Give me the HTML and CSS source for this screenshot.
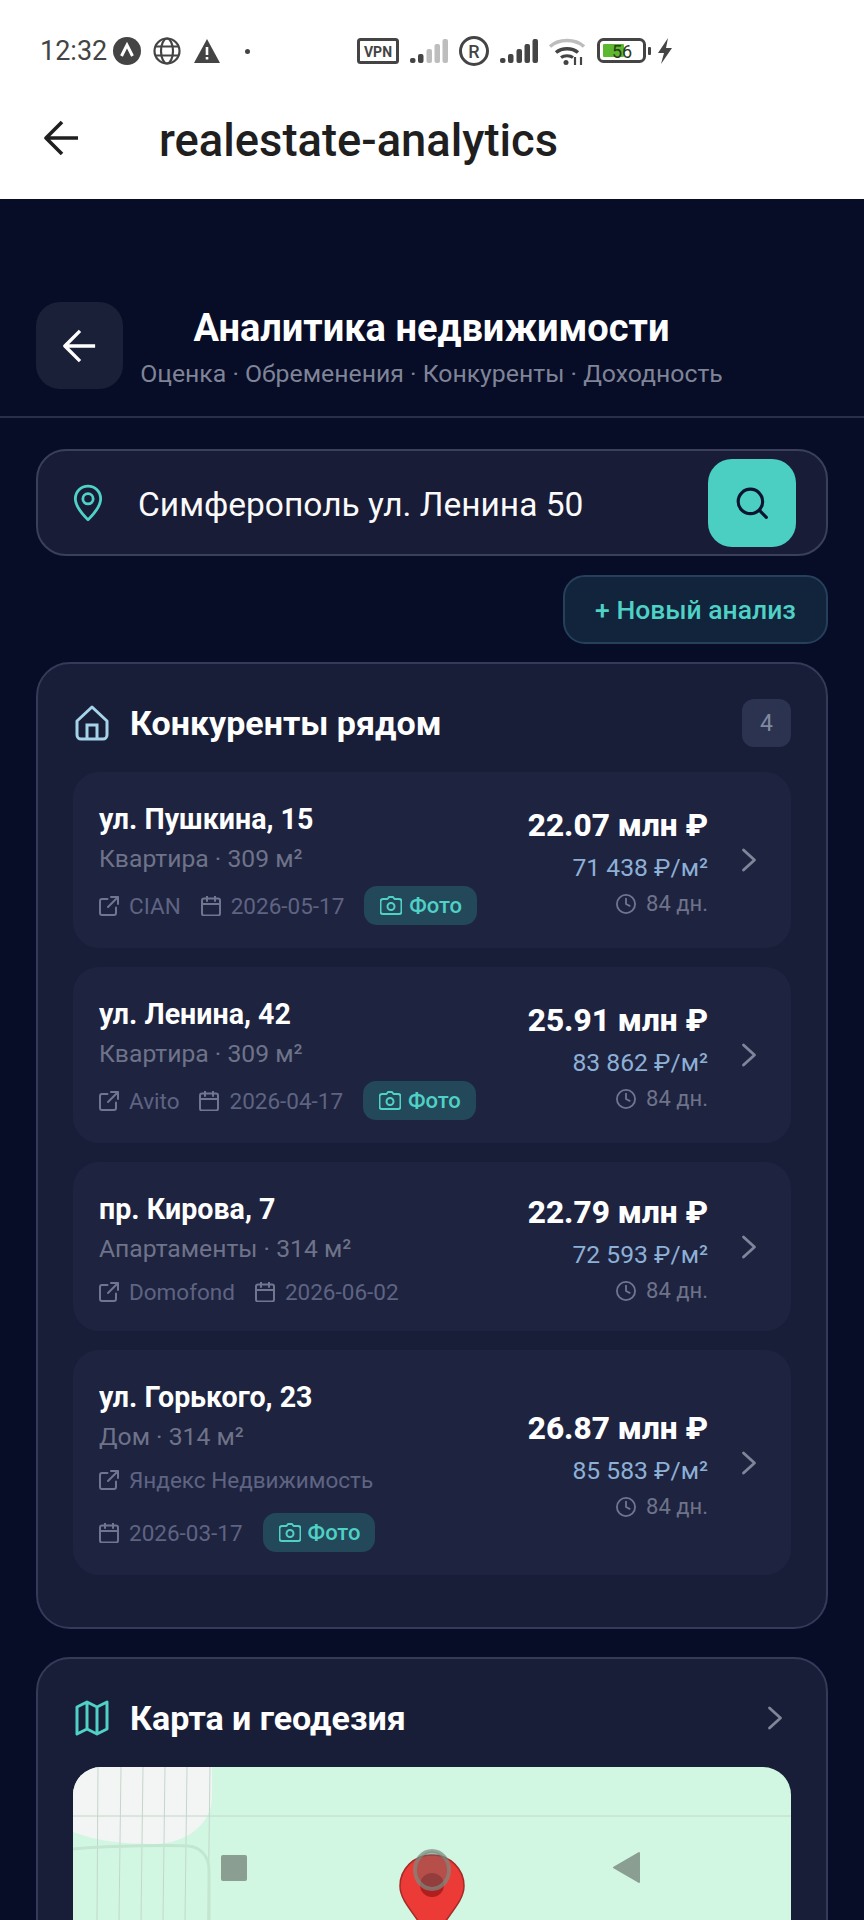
FILE: index.html
```html
<!DOCTYPE html>
<html lang="ru">
<head>
<meta charset="utf-8">
<title>realestate-analytics</title>
<link rel="stylesheet" href="styles.css">
</head>
<body>
<svg class="defs" width="0" height="0" aria-hidden="true">
  <symbol id="i-ext" viewBox="2 2 20 20"><path d="M19 13.500V19a2 2 0 0 1-2 2H5a2 2 0 0 1-2-2V7a2 2 0 0 1 2-2h5.500M14 3h7v7M21 3 11 13" fill="none" stroke="currentColor" stroke-width="2" stroke-linecap="round" stroke-linejoin="round"/></symbol>
  <symbol id="i-cal" viewBox="2 2 20 20"><rect x="3" y="4.500" width="18" height="17" rx="2" fill="none" stroke="currentColor" stroke-width="2"/><path d="M8 2v5M16 2v5M3 10h18" fill="none" stroke="currentColor" stroke-width="2" stroke-linecap="round"/></symbol>
  <symbol id="i-cam" viewBox="1 1 22 22"><path d="M8.500 5 10 3h4l1.500 2H20a2.500 2.500 0 0 1 2.500 2.500v10A2.500 2.500 0 0 1 20 20H4a2.500 2.500 0 0 1-2.500-2.500v-10A2.500 2.500 0 0 1 4 5z" fill="none" stroke="currentColor" stroke-width="2" stroke-linejoin="round"/><circle cx="12" cy="12.500" r="3.500" fill="none" stroke="currentColor" stroke-width="2"/></symbol>
  <symbol id="i-clock" viewBox="1 1 22 22"><circle cx="12" cy="12" r="10" fill="none" stroke="currentColor" stroke-width="2"/><path d="M12 6v6l4 2" fill="none" stroke="currentColor" stroke-width="2" stroke-linecap="round" stroke-linejoin="round"/></symbol>
  <symbol id="i-chev" viewBox="0 0 24 24"><path d="m6.500 2 11 10-11 10" fill="none" stroke="currentColor" stroke-width="2.800" stroke-linecap="round" stroke-linejoin="round"/></symbol>
  <symbol id="i-back" viewBox="0 0 36 36"><path d="M34 18H3M18 2 2 18l16 16" fill="none" stroke="currentColor" stroke-width="3.600" stroke-linejoin="round"/></symbol>
</svg>

<div class="screen">
  <header class="status">
    <span class="clock">12:32</span>
    <svg class="st st-ant" viewBox="0 0 28 28"><circle cx="14" cy="14" r="14" fill="#444"/><path d="m8.500 19 5.500-11 5.500 11" fill="none" stroke="#fff" stroke-width="3"/></svg>
    <svg class="st st-globe" viewBox="0 0 28 28"><g fill="none" stroke="#444" stroke-width="2.200"><circle cx="14" cy="14" r="12.500"/><ellipse cx="14" cy="14" rx="6" ry="12.500"/><path d="M2 9.500h24M2 18.500h24"/></g></svg>
    <svg class="st st-warn" viewBox="0 0 26 24"><path d="M13 0 26 24H0z" fill="#444"/><path d="M11.700 8h2.600v8h-2.600zM11.700 18h2.600v2.600h-2.600z" fill="#fff"/></svg>
    <span class="st-dot"></span>
    <svg class="st st-vpn" viewBox="0 0 42 26"><rect x="1.500" y="1.500" width="39" height="23" rx="2" fill="none" stroke="#444" stroke-width="3"/><text x="21" y="18.500" text-anchor="middle" class="vpn-t">VPN</text></svg>
    <svg class="st st-sig" viewBox="0 0 38 24"><g fill="#444"><rect x="0" y="19" width="5.500" height="5" rx="2"/><rect x="8" y="15" width="5.500" height="9" rx="2"/></g><g fill="#bdbdbd"><rect x="16.500" y="10" width="5.500" height="14" rx="2"/><rect x="24.500" y="5" width="5.500" height="19" rx="2"/><rect x="32.500" y="0" width="5.500" height="24" rx="2"/></g></svg>
    <svg class="st st-r" viewBox="0 0 30 30"><circle cx="15" cy="15" r="13.500" fill="none" stroke="#444" stroke-width="3"/><text x="15" y="21.500" text-anchor="middle" class="r-t">R</text></svg>
    <svg class="st st-sig" viewBox="0 0 38 24"><g fill="#444"><rect x="0" y="19" width="5.500" height="5" rx="2"/><rect x="8" y="15" width="5.500" height="9" rx="2"/><rect x="16.500" y="10" width="5.500" height="14" rx="2"/><rect x="24.500" y="5" width="5.500" height="19" rx="2"/><rect x="32.500" y="0" width="5.500" height="24" rx="2"/></g></svg>
    <svg class="st st-wifi" viewBox="0 0 38 28"><path d="M2 9.500C11 1.500 27 1.500 36 9.500" fill="none" stroke="#bdbdbd" stroke-width="3.500"/><path d="M8 15.500c6-5 16-5 22 0" fill="none" stroke="#444" stroke-width="3.500"/><path d="M13 20.500c3-2.500 9-2.500 12 0" fill="none" stroke="#444" stroke-width="3"/><circle cx="18" cy="25.500" r="2.500" fill="#444"/><path d="M27 20v8M33 20v8" stroke="#444" stroke-width="2.200"/></svg>
    <svg class="st st-bat" viewBox="0 0 54 26"><rect x="1.500" y="1.500" width="46" height="22" rx="5" fill="none" stroke="#444" stroke-width="3"/><rect x="6" y="6" width="21" height="13" rx="1" fill="#5cb82e"/><rect x="51" y="9" width="3" height="8" rx="1" fill="#444"/><text x="25" y="19.500" text-anchor="middle" class="bat-t">56</text></svg>
    <svg class="st st-bolt" viewBox="0 0 16 26"><path d="M11 0 1 15h6l-3 11 11-16H9z" fill="#444"/></svg>
  </header>

  <div class="appbar">
    <svg class="ab-back"><use href="#i-back"/></svg>
    <span class="ab-title">realestate-analytics</span>
  </div>

  <main class="app">
    <div class="top">
      <button class="back"><svg class="back-i"><use href="#i-back"/></svg></button>
      <div class="top-text">
        <h1>Аналитика недвижимости</h1>
        <p>Оценка · Обременения · Конкуренты · Доходность</p>
      </div>
    </div>

    <div class="content">
      <div class="search">
        <svg class="pin-i" viewBox="0 0 32 40"><path d="M16 2C8.500 2 2.500 8 2.500 15.500c0 8.500 8 17 13.500 22.500 5.500-5.500 13.500-14 13.500-22.500C29.500 8 23.500 2 16 2z" fill="none" stroke="#4fd1c5" stroke-width="3" stroke-linejoin="round"/><circle cx="16" cy="15.500" r="5.500" fill="none" stroke="#4fd1c5" stroke-width="3"/></svg>
        <span class="addr">Симферополь ул. Ленина 50</span>
        <button class="go"><svg class="go-i" viewBox="0 0 32 32"><circle cx="14.500" cy="14.500" r="11.500" fill="none" stroke="#0b1530" stroke-width="3"/><path d="m23 23 6.500 6.500" stroke="#0b1530" stroke-width="3" stroke-linecap="round"/></svg></button>
      </div>

      <div class="new-row"><button class="new">+ Новый анализ</button></div>

      <section class="card">
        <div class="card-head">
          <svg class="h-i" viewBox="0 0 34 36"><path d="M2 16 17 2l15 14v14a4 4 0 0 1-4 4H6a4 4 0 0 1-4-4z" fill="none" stroke="#a5d3ea" stroke-width="3" stroke-linejoin="round"/><path d="M12 34V20h10v14" fill="none" stroke="#a5d3ea" stroke-width="3"/></svg>
          <h2>Конкуренты рядом</h2>
          <span class="count">4</span>
        </div>
        <div class="list">
          <article class="item">
            <div class="left">
              <div class="name">ул. Пушкина, 15</div>
              <div class="type">Квартира · 309 м²</div>
              <div class="meta">
                <span class="m"><svg class="m-i"><use href="#i-ext"/></svg>CIAN</span>
                <span class="m"><svg class="m-i"><use href="#i-cal"/></svg>2026-05-17</span>
                <span class="photo"><svg class="c-i"><use href="#i-cam"/></svg>Фото</span>
              </div>
            </div>
            <div class="right">
              <div class="price">22.07 млн ₽</div>
              <div class="per">71 438 ₽/м²</div>
              <div class="days"><svg class="m-i"><use href="#i-clock"/></svg>84 дн.</div>
            </div>
            <svg class="chev"><use href="#i-chev"/></svg>
          </article>
          <article class="item">
            <div class="left">
              <div class="name">ул. Ленина, 42</div>
              <div class="type">Квартира · 309 м²</div>
              <div class="meta">
                <span class="m"><svg class="m-i"><use href="#i-ext"/></svg>Avito</span>
                <span class="m"><svg class="m-i"><use href="#i-cal"/></svg>2026-04-17</span>
                <span class="photo"><svg class="c-i"><use href="#i-cam"/></svg>Фото</span>
              </div>
            </div>
            <div class="right">
              <div class="price">25.91 млн ₽</div>
              <div class="per">83 862 ₽/м²</div>
              <div class="days"><svg class="m-i"><use href="#i-clock"/></svg>84 дн.</div>
            </div>
            <svg class="chev"><use href="#i-chev"/></svg>
          </article>
          <article class="item">
            <div class="left">
              <div class="name">пр. Кирова, 7</div>
              <div class="type">Апартаменты · 314 м²</div>
              <div class="meta">
                <span class="m"><svg class="m-i"><use href="#i-ext"/></svg>Domofond</span>
                <span class="m"><svg class="m-i"><use href="#i-cal"/></svg>2026-06-02</span>
              </div>
            </div>
            <div class="right">
              <div class="price">22.79 млн ₽</div>
              <div class="per">72 593 ₽/м²</div>
              <div class="days"><svg class="m-i"><use href="#i-clock"/></svg>84 дн.</div>
            </div>
            <svg class="chev"><use href="#i-chev"/></svg>
          </article>
          <article class="item">
            <div class="left">
              <div class="name">ул. Горького, 23</div>
              <div class="type">Дом · 314 м²</div>
              <div class="meta">
                <span class="m"><svg class="m-i"><use href="#i-ext"/></svg>Яндекс Недвижимость</span>
                <span class="m"><svg class="m-i"><use href="#i-cal"/></svg>2026-03-17</span>
                <span class="photo"><svg class="c-i"><use href="#i-cam"/></svg>Фото</span>
              </div>
            </div>
            <div class="right">
              <div class="price">26.87 млн ₽</div>
              <div class="per">85 583 ₽/м²</div>
              <div class="days"><svg class="m-i"><use href="#i-clock"/></svg>84 дн.</div>
            </div>
            <svg class="chev"><use href="#i-chev"/></svg>
          </article>
        </div>
      </section>

      <section class="card card-map">
        <div class="card-head">
          <svg class="h-i" viewBox="0 0 34 36"><path d="M2 7 12 2l10 5 10-5v27l-10 5-10-5-10 5zM12 2v27M22 7v27" fill="none" stroke="#4fd1c5" stroke-width="3" stroke-linejoin="round"/></svg>
          <h2>Карта и геодезия</h2>
          <svg class="chev chev-map"><use href="#i-chev"/></svg>
        </div>
        <div class="map">
          <svg class="map-svg" viewBox="0 0 718 153">
            <path d="M0 0h139v30c0 26-25 47-58 47-30 0-58-3-81-12z" fill="#f2f5f3"/>
            <g fill="none" stroke="#c4d6cb" stroke-width="1">
              <path d="M0 49h718"/>
              <path d="M25 0 24 153M48 0 46 153M70 0 68 153M92 0 90 153M114 0 112 153M137 0 135 153"/>
            </g>
            <path d="M0 82c30-3 90-4 115-3 14 1 21 12 21 24v50" fill="none" stroke="#c3e6d1" stroke-width="3"/>
            <path d="M359 88c-18 0-32 14-32 31 0 12 9 22 22 40l10 12 10-12c13-18 22-28 22-40 0-17-14-31-32-31z" fill="#ec3a36" stroke="#a52b28" stroke-width="1.500"/>
            <circle cx="359" cy="118" r="12" fill="#b01e1e"/>
          </svg>
          <svg class="nav-ov" viewBox="0 0 718 153">
            <rect x="148" y="88" width="26" height="26" rx="2" fill="#8b9e92"/>
            <ellipse cx="359" cy="103" rx="17" ry="19" fill="#6b6b66" fill-opacity=".42" stroke="#7c8a80" stroke-opacity=".7" stroke-width="4"/>
            <path d="M566 86v29l-25-14.500z" fill="#8b9e92" stroke="#8b9e92" stroke-width="2" stroke-linejoin="round"/>
          </svg>
        </div>
      </section>
    </div>
  </main>
</div>
</body>
</html>
```

FILE: styles.css
```css
* { box-sizing: border-box; margin: 0; padding: 0; }
html, body { width: 864px; height: 1920px; overflow: hidden; background: #fff; }
body { font-family: Roboto, "Noto Sans", sans-serif; color: #fff; }
button { border: 0; font: inherit; color: inherit; background: none; }
.defs { position: absolute; }
.screen { width: 864px; height: 1920px; display: flex; flex-direction: column; overflow: hidden; }

/* status bar */
.status { height: 90px; flex: none; display: flex; align-items: center; padding: 12px 0 0 40px; background: #fff; }
.clock { font-size: 27px; color: #444; width: 73px; }
.st { display: block; flex: none; }
.st-ant { width: 28px; height: 28px; }
.st-globe { width: 28px; height: 28px; margin-left: 12px; }
.st-warn { width: 26px; height: 24px; margin-left: 13px; }
.st-dot { width: 5px; height: 5px; border-radius: 50%; background: #444; margin-left: 25px; }
.st-vpn { width: 42px; height: 26px; margin-left: 107px; }
.st-sig { width: 38px; height: 24px; margin-left: 11px; }
.st-r { width: 30px; height: 30px; margin-left: 11px; }
.st-wifi { width: 38px; height: 28px; margin-left: 10px; }
.st-bat { width: 54px; height: 26px; margin-left: 11px; }
.st-bolt { width: 16px; height: 26px; margin-left: 6px; }
.vpn-t { font: 700 14px Roboto, sans-serif; fill: #444; }
.r-t { font: 500 18px Roboto, sans-serif; fill: #444; }
.bat-t { font: 400 18px Roboto, sans-serif; fill: #2b3a1a; }

/* app bar */
.appbar { height: 109px; flex: none; display: flex; align-items: center; background: #fff; padding: 0 0 14px 44px; }
.ab-back { width: 36px; height: 36px; color: #1f1f1f; flex: none; }
.ab-title { font-size: 45.300px; font-weight: 500; color: #1f1f1f; margin: 5px 0 0 79px; white-space: nowrap; }

/* dark app */
.app { flex: 1; min-height: 0; background: #070c27; }
.top { height: 219px; padding: 103px 0 0 36px; display: flex; border-bottom: 2px solid #2a2e48; }
.back { width: 87px; height: 87px; border-radius: 24px; background: #1a2038; display: flex; align-items: center; justify-content: center; flex: none; }
.back-i { width: 34px; height: 34px; color: #fff; }
.top-text { width: 583px; margin-left: 17px; text-align: center; }
h1 { font-size: 38px; line-height: 40px; font-weight: 700; margin-top: 6px; white-space: nowrap; }
.top-text p { font-size: 24.800px; line-height: 30px; color: #7f8496; margin-top: 11px; white-space: nowrap; }

.content { padding: 31px 36px 0; }
.search { height: 107px; border: 2px solid #3a3f5c; border-radius: 30px; background: #191c37; display: flex; align-items: center; padding: 0 30px 0 35px; }
.pin-i { width: 30px; height: 38px; flex: none; }
.addr { font-size: 33.500px; margin: 4px 0 0 35px; flex: 1; white-space: nowrap; color: #fafafa; }
.go { width: 88px; height: 88px; border-radius: 24px; background: #4ccfc3; display: flex; align-items: center; justify-content: center; flex: none; }
.go-i { width: 34px; height: 34px; }
.new-row { display: flex; justify-content: flex-end; margin-top: 19px; }
.new { width: 265px; height: 69px; border: 2px solid #25405a; border-radius: 22px; background: #12233c; color: #4fd1c5; font-size: 26.500px; font-weight: 500; }

.card { margin-top: 18px; height: 967px; border: 2px solid #343a58; border-radius: 34px; background: #191e38; padding: 0 35px; }
.card-head { height: 108px; padding-top: 10px; display: flex; align-items: center; }
.h-i { width: 34px; height: 36px; flex: none; margin-left: 2px; }
h2 { font-size: 34px; font-weight: 700; margin-left: 21px; flex: 1; white-space: nowrap; }
.count { width: 49px; height: 48px; border-radius: 12px; background: #2b3350; color: #7f8aa0; font-size: 23px; display: flex; align-items: center; justify-content: center; }
.list { display: flex; flex-direction: column; gap: 19px; }
.item { border-radius: 26px; background: #1e2340; display: flex; align-items: center; padding: 30px 30px 23px 26px; }
.left { flex: 1; min-width: 0; }
.name { font-size: 28.600px; line-height: 34px; font-weight: 700; white-space: nowrap; }
.type { font-size: 24.700px; line-height: 30px; color: #6e7389; margin-top: 8px; white-space: nowrap; }
.meta { display: flex; flex-wrap: wrap; align-items: center; gap: 17px 20px; margin-top: 12px; font-size: 22.500px; line-height: 32px; color: #5e6482; white-space: nowrap; }
.m { display: flex; align-items: center; }
.m-i { width: 20px; height: 20px; flex: none; margin-right: 10px; color: #70768f; }
.c-i { width: 22px; height: 22px; flex: none; margin-right: 7px; color: #4fd1c5; }
.photo { height: 39px; border-radius: 13px; background: #23485a; color: #4fd1c5; font-size: 22px; font-weight: 500; display: flex; align-items: center; padding: 0 15px 0 16px; }
.right { flex: none; text-align: right; padding-top: 1px; width: 200px; }
.price { font-size: 31.600px; line-height: 34px; font-weight: 800; white-space: nowrap; }
.per { font-size: 24.700px; line-height: 30px; color: #8db0d6; margin-top: 10px; white-space: nowrap; }
.days { font-size: 22px; line-height: 30px; color: #6e7389; margin-top: 6px; display: flex; justify-content: flex-end; align-items: center; }
.chev { width: 24px; height: 24px; color: #80869a; flex: none; margin: 0 0 7px 29px; }
.card-map { margin-top: 28px; }
.chev-map { margin: 0 4px 0 0; }
.map { height: 153px; border-radius: 28px 28px 0 0; background: #d1f7e2; overflow: hidden; position: relative; }
.map-svg { display: block; width: 718px; height: 153px; }
.nav-ov { position: absolute; inset: 0; width: 718px; height: 153px; }
```
